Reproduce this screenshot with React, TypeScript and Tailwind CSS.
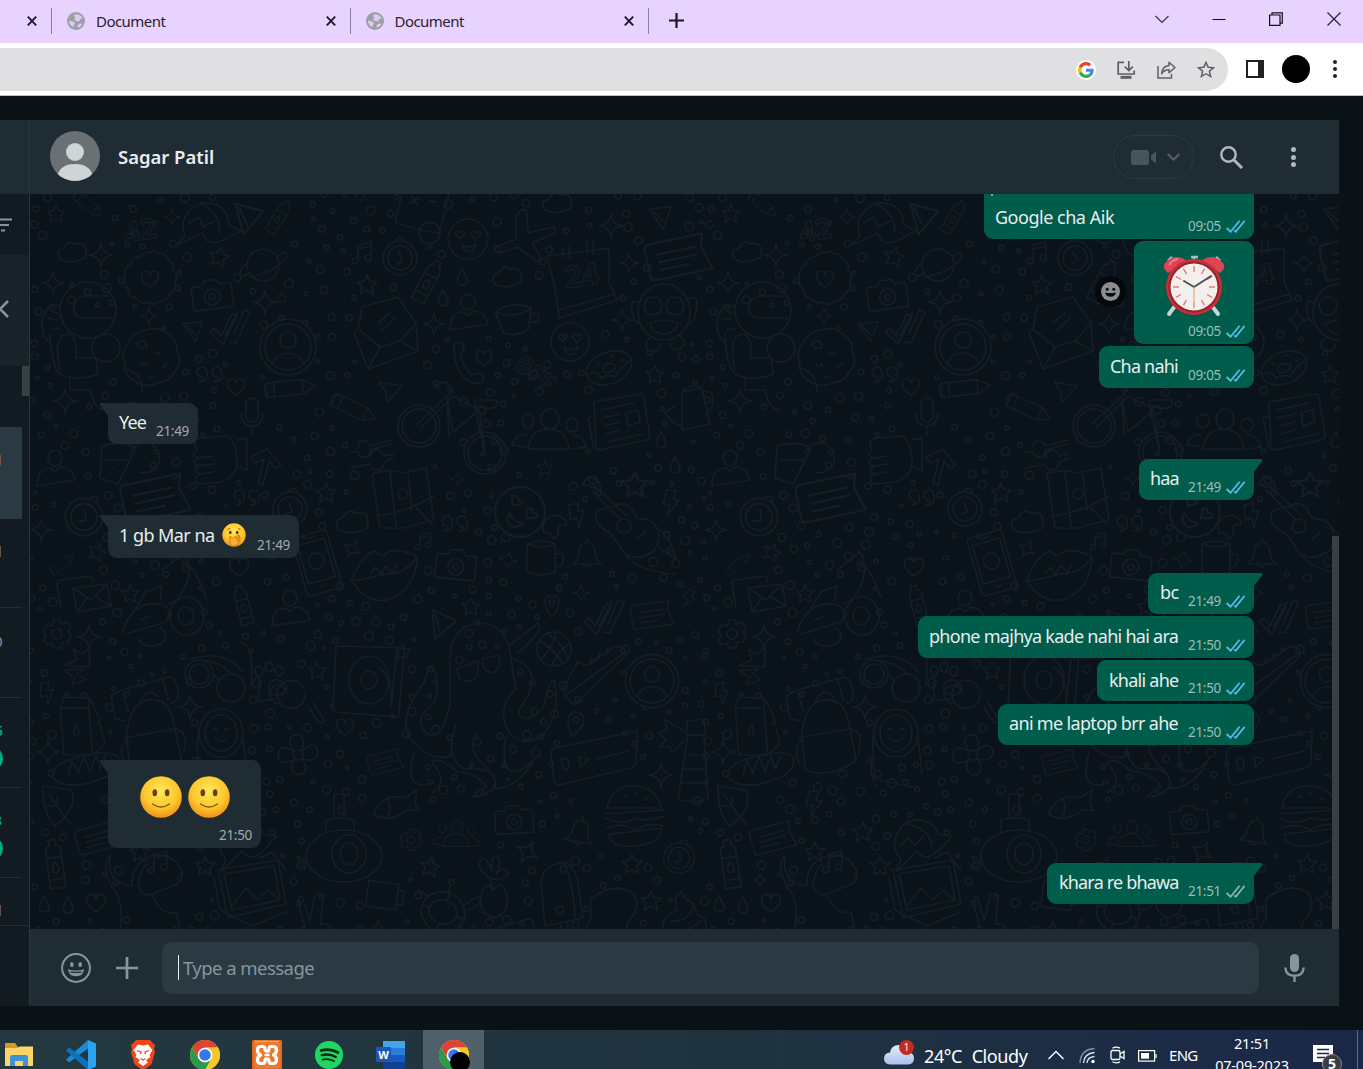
import React from 'react';

/* ---------- wallpaper doodles ---------- */

const P: Record<string, string> = {
  star: 'M0-10 2.8-3.6 10-3 4.6 1.8 6.4 9 0 5.2-6.4 9-4.6 1.8-10-3-2.8-3.6Z',
  spark: 'M0-12Q1-1 12 0Q1 1 0 12Q-1 1-12 0Q-1-1 0-12Z',
  heart: 'M0 8C-13 0-9-8-4-8Q-1-8 0-4Q1-8 4-8C9-8 13 0 0 8Z',
  cloud: 'M-12 7Q-18-1-8-4Q-4-13 4-8Q15-10 14 0Q17 6 7 8Q-4 12-12 7Z',
  camera: 'M-18-9H-9L-6-14H6L9-9H18Q20-9 20-7V13Q20 15 18 15H-18Q-20 15-20 13V-7Q-20-9-18-9ZM8 3A8 8 0 1 1-8 3A8 8 0 1 1 8 3ZM3 3A3 3 0 1 1-3 3A3 3 0 1 1 3 3Z',
  check: 'M-20 4-15 0-9 8 2-14 7-12-7 16ZM-5 8 8-16M0 14 6 15 20-16 14-18 4 6',
  tri: 'M-10-8 12-10 4 12ZM-6-6 4 4',
  note: 'M-24-10Q-24-14-20-14H22L19-4 24 14H-20Q-24 14-24 10ZM-15-5H14M-15 1H14M-15 7H6',
  quotes: 'M-3-5A5 5 0 1 0-6 3Q-5 7-10 8Q0 8-2-2ZM12-5A5 5 0 1 0 9 3Q10 7 5 8Q15 8 13-2Z',
  music: 'M-6 8V-8L7-11V5M-6 8A3 3 0 1 1-9 5H-6M7 5A3 3 0 1 1 4 2H7M-6-4 7-7',
  bolt: 'M-4-12 5-11 2-3 8-2-3 13-1 3-8 2Z',
  pin: 'M0 13Q-8 1-8-4A8 8 0 1 1 8-4Q8 1 0 13ZM3-4A3 3 0 1 1-3-4A3 3 0 1 1 3-4Z',
  bell: 'M-14 10Q-8 6-8-2Q-7-11 0-12Q7-11 8-2Q8 6 14 10ZM-4 10Q0 16 4 10M0-12V-16',
  avatar: 'M28 0A28 28 0 1 1-28 0A28 28 0 1 1 28 0ZM23 0A23 23 0 1 1-23 0A23 23 0 1 1 23 0ZM8-7A8 8 0 1 1-8-7A8 8 0 1 1 8-7ZM-15 16Q-12 6 0 6Q12 6 15 16',
  face: 'M20 0A20 20 0 1 1-20 0A20 20 0 1 1 20 0ZM-13-6Q-10-10-7-6Q-4-10-3-6L-8 0ZM3-6Q6-10 8-6Q12-9 13-5L7 1ZM-6 6Q2 10 8 5Q6 14 0 13Q-5 12-6 6Z',
  ring: 'M17 0A17 17 0 1 1-17 0A17 17 0 1 1 17 0ZM12 0A12 12 0 1 1-12 0A12 12 0 1 1 12 0ZM-2-6 3 2-3 6M-4-18Q0-24 4-18',
  bottle: 'M-7 22V-10Q-7-16-3-17V-22H3V-17Q7-16 7-10V22ZM0-2Q-6 7 0 8Q6 7 0-2ZM-7-6H7M-7 14H7',
  envelope: 'M-30-6-26-28 10-38 28-12 30 16-20 34-34-2ZM-30-6-8 12 12 6 28-12M-8 12-20 34M12 6 30 16M-10-12 2-22M-6-4 8-18',
  letters: 'M-24 12-28-12Q-28-16-24-16L4-20Q8-20 8-14M-12-8 22-12 26 10-8 16ZM-12-8 6 4 22-12M-8 16 2 2M26 10 10 0',
  person: 'M7-14A7 8 0 1 1-7-14A7 8 0 1 1 7-14ZM-18 14Q-18-4-4-4L0 0 5-5Q18-4 20 8Z',
  people: 'M9-14A9 10 0 1 1-9-14A9 10 0 1 1 9-14ZM-22 16Q-20-3-3-4Q17-4 19 16ZM-16-12A6 7 0 1 1-28-12A6 7 0 1 1-16-12ZM-24 2Q-34 0-38 12L-24 14M28-8A6 7 0 1 1 16-8A6 7 0 1 1 28-8ZM22 2Q32 2 36 14L22 16',
  cup: 'M-18-8Q0-18 18-8L14 12Q0 20-12 14ZM-18-8Q0 2 18-8M17-2Q28-4 24 4Q20 8 14 6',
  mug: 'M-14-14Q0-20 14-14V14Q0 20-14 14ZM-14-14Q0-8 14-14M14-4Q24-6 22 4Q20 10 14 8',
  donut: 'M-22 8Q-26-4-8-14Q14-22 22-10Q26 4 8 14Q-16 22-22 8ZM7-2Q5 4-2 5Q-8 4-6-1Q0-8 7-2ZM-20 6Q-12 2-8 10Q0 6 6 9Q10 0 22-8M-12-6-9-3M2-13 5-11M12-6 15-9',
  phone: 'M-14-18Q-16-22-10-23-4-22-4-15L-7-10Q-6 2 4 10L10 8Q17 8 15 15 10 20 4 18-14 10-14-18Z',
  mobile: 'M-18-26Q-18-30-14-30H14Q18-30 18-26V26Q18 30 14 30H-14Q-18 30-18 26ZM-14-22H14V18H-14ZM8-2A8 8 0 1 1-8-2A8 8 0 1 1 8-2ZM-4-26H4M-3 24H3',
  lips: 'M-34 10Q-22-14-8-18L0-12Q12-22 34-8Q22 8 2 6Q-12 8-34 10ZM-32 12Q-20 34 0 32Q28 26 34-6M-14 4-8-2-4 6 2-2 8 5 14-3',
  map: 'M-30-24Q-12-30 0-25L24-30 32 22Q14 26 2 30L-22 30ZM-26 18Q0 16 32-2M12 8 30 26M-12-26-6 28M6-24 10 12M6-4A5 5 0 1 1-4-4A5 5 0 1 1 6-4Z',
  bike: 'M21 0A21 21 0 1 1-21 0A21 21 0 1 1 21 0ZM17 0A17 17 0 1 1-17 0A17 17 0 1 1 17 0ZM87 27A21 21 0 1 1 45 27A21 21 0 1 1 87 27ZM83 27A17 17 0 1 1 49 27A17 17 0 1 1 83 27ZM-2-2 30-32Q36-42 24-44Q14-42 20-36M2 2 34-30 60-16 34 6 28-28M28-28 30 10M60-16 66 27M56-18 66 27M56-26H78Q80-16 66-18L56-20Z',
  calendar: 'M-36-26 26-34V0L34 18-24 36-28 6ZM-28 6-36-26M-24 28 32 12M-20-36V-24M-14-36V-24M4-40V-28M10-40V-28',
  monkey: 'M26 0A26 28 0 1 1-26 0A26 28 0 1 1 26 0ZM-2-6A9 9 0 1 1-20-6A9 9 0 1 1-2-6ZM20-6A9 9 0 1 1 2-6A9 9 0 1 1 20-6ZM-24-8Q-34-16-32 0Q-30 10-24 12M24-12Q36-20 32 0Q30 12 24 12M-14 12Q0 4 14 12Q10 22 0 22Q-10 22-14 12ZM-14 26A7 7 0 1 0-4 32M6 30A7 7 0 1 0 16 24',
  planet: 'M16 0A16 16 0 1 1-16 0A16 16 0 1 1 16 0ZM-14 8Q-26 16-22 4Q-19 0-15-2M14-8Q26-18 23-6Q10 8-14 12',
  badge: 'M0-26Q5-30 9-25Q16-26 18-19Q25-16 23-9Q29-3 25 3Q27 11 20 14Q18 22 10 22Q4 28-2 23Q-10 26-14 19Q-22 18-22 10Q-29 4-25-3Q-27-10-20-14Q-18-22-10-22Q-6-28 0-26ZM0 8C-13 0-9-8-4-8Q-1-8 0-4Q1-8 4-8C9-8 13 0 0 8Z',
  astro: 'M28-38A28 28 0 1 1-28-38A28 28 0 1 1 28-38ZM24-30H-6Q-16-32-14-44Q-8-54 4-52H22M-28-42Q-44-44-46-26Q-46-10-38-6M-40-30-30-28M-38-38-30-34M-36-18-28-20M-38-14Q-36 20-28 26Q-10 34 10 26L8 10H-12V-4Q-16-18-26-12Q-34-4-28 22M18-14A14 14 0 1 0 32 0A14 14 0 0 0 18-14M-18 30V42H2Q6 62 18 62M36 20Q54 24 54 44',
  cookie: 'M0-28Q10-30 18-22Q27-16 26-6Q32 6 24 14Q18 26 6 26Q-6 32-16 24Q-28 18-26 6Q-31-6-23-14Q-18-26 0-28ZM-14-14Q-6-20-4-10Q-12-6-14-14ZM10-6A3 3 0 1 1 4-6M-4 6A3 3 0 1 1-10 6M12 10 16 6M-2 20H4',
  pencil: 'M-26-8H14L28 0 14 8H-26ZM-18-8V8M14-8V8M-26-8Q-32 0-26 8',
  mic: 'M-6-12A6 6 0 0 1 6-12V0A6 6 0 0 1-6 0ZM-11-2Q-10 10 0 10Q10 10 11-2M0 10V20',
  plane: 'M-4-26Q2-30 3-22L4-4 30-10Q32-6 30-4L8 6 18 22Q16 26 12 24L-6 10-24 16Q-30 16-28 10L-8 2-8-20Z',
  calc: 'M-24-26 20-28Q24-28 24-24V14Q24 18 20 18H-20Q-24 18-24 14ZM-14-14-6-6M-14-6-6-14M6-14H14M14 8A11 11 0 1 0 25 19A11 11 0 0 0 14 8',
  news: 'M-26-20 20-28Q24-28 24-24L30 14Q30 18 26 18L-20 28Q-24 28-24 24ZM-26-6-32-4-26 26-20 28M-18-12 14-19M-18-4 0-8M-16 4 0 0M-14 12 0 8M-12 20 22 12M6-9 18-12 20 0 8 4Z',
  kettle: 'M-10-18 10-22 18 14-10 20ZM-16-4-28 2M-28 2Q-18 16-10 16M10-18Q24-22 20-4L14 6M-10-18Q0-28 10-22',
  sliders: 'M-26 2H-18A6 6 0 0 0-6 0L16-6M-26 18-6 14A6 6 0 0 0 8 12L18 8M-18-2A6 6 0 0 1-6-4L16-10M-6 8A6 6 0 0 1 8 6L18 4',
  guitar: 'M-42-44-36-52-26-46-24-38ZM-30-42 2-12M-34-38-4-8M6-2A7 7 0 1 1-8-2A7 7 0 1 1 6-2ZM-10-22Q0-28 8-18Q10-8 24-8Q40 2 30 22Q14 34 0 26Q-8 14-14 6Q-36-6-26-18ZM30 0Q46 6 50 30M0 26Q14 44 50 46M34 20 52 32M12 12 20 4',
  ball: 'M17 0A17 17 0 1 1-17 0A17 17 0 1 1 17 0ZM-14-8Q0 0 8 14M-6-15Q8-6 14 9M-13 10Q-2 0 2-17M-2 16Q4 2 16-6',
  burger: 'M-28-6Q-24-28-2-28Q22-28 26-6ZM-30 0 28-4M-30 4Q-14 12 0 4Q14 8 30 2M-28 14Q-14 8 0 16Q14 8 28 12M-26 20Q0 18 26 14Q26 30 0 32Q-26 34-26 20ZM-12-16-9-18M0-20 3-22M10-14 13-16',
  gear: 'M-3-14H3L5-10 10-12 14-7 11-3 14 2 11 8 6 8 4 14H-3L-5 9-10 11-14 6-11 2-14-4-10-9-5-8ZM5 0A5 5 0 1 1-5 0A5 5 0 1 1 5 0Z',
  sub: 'M38 0A38 26 0 1 1-38 0A38 26 0 1 1 38 0ZM22-2A17 19 0 1 1-12-2A17 19 0 1 1 22-2ZM14-2A9 11 0 1 1-4-2A9 11 0 1 1 14-2ZM-18-24V-36Q-4-40 10-36V-26M-10-38V-62H0V-38M-38 6Q-52-6-44 6Q-54 14-38 10',
  turntable: 'M-33-34 32-32Q36-32 35-28L30 34Q30 38 26 37L-33 32Q-36 32-36 28ZM20 0A20 24 0 1 1-20 0A20 24 0 1 1 20 0ZM8 0A8 9 0 1 1-8 0A8 9 0 1 1 8 0ZM10-12Q24-4 22 24M28-30 22 26',
  octo: 'M-34 8V-40Q-32-72-4-74Q22-72 26-44L32-8M-28-28-6-36V-22Q-12-12-24-18ZM-2-38 14-42Q20-30 8-24-2-26-2-38M-34 8Q-44 48-58 36Q-70 22-54 10Q-44 2-48-22Q-54-40-60-14Q-92 28-68 48Q-50 66-30 58M32-8Q14 8 22 30Q34 52 56 40Q78 20 70-18Q64-12 60 8Q56 18 44 22Q28 20 40 6Q60-28 30-38M-28 28Q-40 60-20 72Q6 70 10 80Q14 98-12 100Q-4 92 2 90Q-6 76-28 74Q-46 58-52 66Q-34 84-52 96M-8 36Q-18 54 4 72Q16 88 10 92Q36 90 50 62Q32 82 22 70Q18 54 22 40M26-52 54-74Q62-68 34-44M-70 56Q-82 96-50 86',
  turtle: 'M22 0A22 20 0 1 1-22 0A22 20 0 1 1 22 0ZM14 0A14 12 0 1 1-14 0A14 12 0 1 1 14 0ZM-14 0H-22M14 0H22M0-12V-20M0 12V20M-20-10-30-12M18-14Q28-30 32-26Q32-16 22-10M22 8 30 12M-2 20V34M-2-20V-28',
  fish: 'M-22 8Q-10-14 10-8L22-16 20-2 24 4 12 4Q-4 18-22 8ZM-8-8Q-2 0-8 12M-14 3H-13',
  bread: 'M-32 8Q-38-4-14-12Q14-22 30-16Q38-8 24 4Q-14 22-32 8ZM-18 4-14-10-8 2-2-14 4 0 10-16 14-2 20-16',
  milk: 'M-22-22-18-34H10L20-14 28 18 14 30H-18ZM-22-22H10L14 30M10-34V-22M-4-4Q-10 8-4 9Q2 8-4-4ZM18-4 24-10',
  bag: 'M-24 40-28 4Q-24-32-4-34Q18-36 22-8L30 30Q0 50-24 40ZM-30 6 26-4M-26 8Q-38 14-30 34M26-2Q38 0 32 22M-30-12-40-14-44-38-34-44 18-58Q28-54 26-34L20-30M-14-30Q-6-50 6-36M10-56 16-34M-32-42-26-22',
  girl: 'M22 0A22 24 0 1 1-22 0A22 24 0 1 1 22 0ZM16 0A16 18 0 1 1-16 0A16 18 0 1 1 16 0ZM-22-4Q-26 20-20 46L16 54M22 4 26 40M-20 24Q-30 30-20 54M-8-3Q-6-7-4-3M4-3Q6-7 8-3M-6 5Q0 11 6 5',
  goggles: 'M-12 0A14 14 0 1 1-40 0A14 14 0 1 1-12 0ZM20 14A14 14 0 1 1-8 14A14 14 0 1 1 20 14ZM-36-14Q0-26 18-2M-30-14Q-4-14 6 0M16-32Q30-28 26 12M-12 0-6 6M-16 0A10 10 0 1 1-36 0A10 10 0 1 1-16 0Z',
  scooter: 'M-40 14Q-30-18-2-14Q12-10 4 4L-36 16M42-2A17 19 0 1 1 8-2A17 19 0 1 1 42-2ZM32-2A8 9 0 1 1 16-2A8 9 0 1 1 32-2ZM4 4 10-4M-24 20A14 10 0 1 0-2 10M-26-10-16-26 0-32-2-18M20-56 28-50Q24-20 6-14M22-58Q36-46 44-20M0-48 16-60 22-66Q30-60 24-50M-22 2-12-2',
  magnify: 'M10 0A14 14 0 1 1 9-4M18 10 30 28 24 30 14 14M-8 0A9 9 0 1 0-14 10M-36-12V8L-20 6',
  paw: 'M-12-10A4 5 0 1 1-12-12M-2-14A4 5 0 1 1-2-16M8-10A4 5 0 1 1 8-12M-14 2A4 5 0 1 1-14 0M-6 2Q4-8 12 6Q6 18-6 10Z',
  dog: 'M-28 0Q-30-22-8-30Q14-34 22-14Q24-4 12 0L-8 8Q-20 12-22-4Q-18-20-12-22M-30 0Q-54-4-50-30Q-60-20-46 4Q-36 14-40 44L-20 46M-8 8Q0 30 16 26L20 44H0M22-14 18-8M0-16H3',
  picture: 'M-34-18 26-28 34 16-24 30ZM-28-14 22-22 28 12-20 22ZM-20 18-6 0 6 12 16 2 28 12M-38-10-32 22 0 38 34 24M8-30 20-36 34-18',
  peace: 'M-12 0Q-24-34-16-34L-8-8-2-34Q4-40 6-32L4-4M-16 4Q-20 28 0 30Q20 30 18 6Q14-6 4-4M-12-2Q-24 0-16 10Q0 8 4 14M0 2Q14 0 10 14',
  fist: 'M-20-12Q-26-24-14-24L10-26Q20-20 20 0Q20 14 4 20L-18 22Q-26 16-16 12Q-26 10-18 4Q-28 0-18-4Q-28-8-20-12ZM-18-4-4-6M-18 4-4 2M-16 12-4 10M20-22 30-24V8L20 4',
  shoe: 'M-30 14-16-12Q-8-4 0-12L20-26Q34-28 30-16L-20 32-30 22ZM-28 22 30-20M-6-8-2-14M4-14 6-20M12-20 14-26',
  voice: 'M-44-12Q-44-16-40-17L42-34 41-2Q40 2 36 3L-36 20Q-40 20-41 16ZM-34-6Q-26-10-26 2Q-32 10-34-6ZM-16-8-6-6-14 2ZM2-6 34-14',
  light: 'M-8-20H8L12 44Q0 50-18 44ZM-8-34 8-36 10-20H-10ZM-12 0H10M-14 14H10M-14 28H12M-12-24-32-36-28-26-38-22-30-16-36-8-26-8-24-2-12-14',
  ice: 'M-18-16Q-18-34 4-38Q18-34 20-10L24 18-14 26ZM-6-2H-5M8-6H9M-4 8 4 6Q6 14 0 14ZM2 24 4 38 10 36 8 22M4-38Q14-20 16 16',
  cupcake: 'M-22 6Q-24-10-8-14L-10-26-4-34Q-2-26 8-22Q12-8 20-6L22 6-22 18ZM-22 18-8 42Q10 44 20 32L22 6M-14-4Q2-2 8-18M-20 10Q6 6 16-4',
  radish: 'M-12 4Q-18 24 0 30Q18 24 12 4Q6-8 0 2Q-8-8-12 4ZM-2 2-4-10Q-20-20-12-30Q-6-30-2-16Q-4-32 4-32Q8-26 2-14Q12-24 14-14Q8-6-4-10',
  battery: 'M-20-14H10V12H-20ZM10-8H16V6H10Z',
  chatface: 'M-32-22 22-38Q26-38 27-34L34 10 28 26 18 18-20 30Q-24 30-25 26ZM14-2A16 18 0 1 1-18-2A16 18 0 1 1 14-2ZM-10-4Q-7-8-5-4M6-12V-8M-10 4Q0 14 8 0',
  cat: 'M-26 20-28-12-18-6H8L16-18 20 20M-12 6H-11M4 4H5M-6 12 0 14 4 10M36 20Q46 0 34-12',
  blob: 'M-22-24Q0-42 20-30Q30-16 14 0Q14 20 6 28Q-4 30-10 14L-28 10Q-28 2-22-4Z',
  leaf: 'M-14-20 14-16Q22 2-2 20Q-14 10-14-20ZM-8-12 4 6M4 6 14 18M-10 0 0 0 0-10',
  flower: 'M5 0A5 5 0 1 1-5 0A5 5 0 1 1 5 0ZM-4-4Q-14-20 0-20Q8-18 4-4Q18-16 20-2Q18 8 4 4Q14 18 0 20Q-10 16-4 5Q-20 12-20 0Q-18-12-4-4Z',
  drop: 'M0-8Q-8 4-2 8Q8 8 4 0Z',
  glass: 'M-14-18Q6-24 20-16L2 20-16 14ZM-10-4 12-4M-4 4H-3M2 8H3M14-10A15 15 0 1 1 24 8',
  arrow: 'M0-16 14 0 8 3 2-4-4 20-9 18-3-6-12-2-16-8Z',
  cursor: 'M-10-8 13-4-2 12-3 2Z',
  croissant: 'M-10 6Q-14-10 2-12Q14-8 12-2Q4-4 4 2Q6 8 0 12Q-4 4-10 6Z',
  burst: 'M-4-20 6-14 14-22 14 0-14-2 0-8ZM-14 4 8 2 0 8 10 14-6 20-2 12Z',
  eyes: 'M-22 10Q-30-10-6-22Q20-24 22 0L34 6 26 10Q0 26-4 8L-30 20ZM-6-22Q16-8 12 8M-18-2-8-8-4 2 8-4',
};

type D = [string, number, number, number?, number?];
const DOODLES: D[] = [
  ['star', 56, 214, 0, 0.9], ['pencil', 88, 205, 40, 0.6], ['eyes', 207, 225], ['spark', 172, 217, 0, 0.7], ['tri', 244, 218, 20, 1.3],
  ['bottle', 279, 217, 32, 0.8], ['cloud', 72, 252], ['spark', 101, 255], ['badge', 150, 279], ['star', 219, 257, 12], ['planet', 263, 265],
  ['camera', 212, 294, -8], ['spark', 53, 283, 0, 0.9], ['spark', 265, 302], ['astro', 88, 348], ['cookie', 151, 357], ['check', 230, 328],
  ['tri', 192, 331, 0, 0.9], ['spark', 149, 316, 0, 0.7], ['avatar', 288, 347], ['quotes', 209, 374], ['heart', 236, 387], ['pencil', 290, 388, -6, 0.9],
  ['spark', 65, 401], ['mic', 252, 416], ['calc', 421, 212, 14, 0.95], ['face', 468, 239], ['plane', 524, 237], ['ring', 400, 258], ['bottle', 428, 281, 28],
  ['star', 367, 285], ['music', 364, 253], ['envelope', 388, 335], ['cloud', 507, 277], ['drop', 462, 277], ['drop', 443, 298],
  ['person', 468, 316], ['cup', 514, 318, -6], ['calendar', 583, 282], ['spark', 611, 226], ['tri', 659, 217], ['cloud', 557, 203], ['note', 678, 257, -12, 1.3],
  ['monkey', 664, 312], ['face', 570, 342, 0, 0.95], ['donut', 609, 368], ['star', 655, 375, 0, 0.9], ['spark', 434, 324, 0, 0.9], ['spark', 622, 320, 0, 0.9],
  ['phone', 468, 365], ['heart', 484, 358, 0, 0.9], ['spark', 629, 263, 0, 0.8], ['bike', 419, 426], ['people', 550, 433], ['news', 620, 422], ['kettle', 692, 410],
  ['pencil', 354, 409, 25, 0.85], ['cursor', 389, 390], ['sliders', 376, 450], ['map', 402, 498], ['star', 545, 468, 0, 0.8], ['face', 520, 512, 40, 1.25],
  ['quotes', 454, 523], ['camera', 456, 564, 6], ['mug', 541, 558], ['bell', 587, 554], ['guitar', 625, 528], ['star', 635, 485, 0, 1.3], ['bolt', 577, 515, -20],
  ['bolt', 671, 502], ['lips', 384, 568, -6], ['cloud', 352, 522, 0, 1.1], ['music', 425, 541, 0, 0.8], ['spark', 352, 549, 30, 0.8], ['spark', 508, 560, 10, 0.8],
  ['croissant', 554, 527], ['spark', 458, 479, 0, 0.6], ['glass', 116, 464], ['person', 55, 472], ['fist', 217, 462], ['arrow', 267, 465], ['ring', 84, 517, 30, 1.1],
  ['note', 155, 498, -12, 1.35], ['quotes', 246, 497], ['ring', 290, 509, 10], ['star', 326, 493], ['spark', 41, 530, 0, 0.9], ['star', 97, 552, 20, 0.9],
  ['pencil', 63, 564, -38, 0.5], ['letters', 85, 596], ['star', 130, 594, 0, 0.9], ['scooter', 162, 618], ['mobile', 317, 563, -16], ['bottle', 243, 605, -14, 0.9],
  ['person', 290, 612], ['heart', 239, 567, 0, 1.1], ['gear', 57, 634], ['spark', 89, 637], ['burst', 77, 667, 0, 0.9], ['bolt', 47, 693, -15, 0.9], ['bag', 153, 732, 0, 0.95],
  ['goggles', 225, 674], ['paw', 275, 682], ['magnify', 295, 693], ['star', 317, 671, 0, 0.9], ['milk', 80, 728, 0, 0.9], ['girl', 221, 733], ['spark', 190, 707],
  ['turntable', 369, 680], ['star', 471, 607, 0, 0.9], ['tri', 438, 624, 30, 1.2], ['ball', 554, 649], ['shoe', 594, 673], ['avatar', 652, 681, 0, 0.95],
  ['note', 652, 615, -8, 0.85], ['check', 604, 618], ['pin', 552, 606, 0, 0.9], ['octo', 484, 697], ['pin', 575, 724, 15], ['voice', 595, 765], ['light', 696, 755],
  ['burger', 635, 814], ['bell', 580, 832, 10], ['camera', 514, 819, -4, 0.95], ['fish', 395, 806], ['sub', 344, 856], ['people', 457, 836, 0, 0.65], ['gear', 411, 840, 0, 0.75],
  ['radish', 494, 888], ['ice', 559, 900], ['blob', 613, 923], ['cupcake', 685, 925], ['star', 632, 864], ['ring', 679, 858, 20, 0.9], ['turtle', 443, 912, 20],
  ['battery', 387, 897, 8], ['peace', 317, 928, 0, 0.95], ['person', 360, 948], ['chatface', 506, 957], ['cat', 586, 985], ['star', 651, 901], ['note', 385, 762, -14, 0.7],
  ['star', 403, 652, 0, 0.8], ['bread', 86, 771], ['leaf', 57, 806], ['note', 98, 838, -15, 0.9], ['bottle', 55, 864, -8, 1.1], ['dog', 160, 886], ['picture', 252, 888],
  ['star', 205, 866], ['heart', 96, 903, 0, 1.1], ['drop', 44, 904], ['drop', 68, 905], ['spark', 48, 752], ['flower', 298, 755], ['eyes', 243, 842, -20], ['star', 140, 852],
  ['bolt', 139, 803], ['star', 188, 832], ['spark', 661, 775], ['bolt', 689, 598, 20, 0.7], ['heart', 345, 727], ['spark', 581, 593, 0, 0.7], ['star', 430, 867, 10], ['star', 419, 954],
  ['spark', 527, 852, 30], ['spark', 378, 930, 0, 0.8], ['drop', 661, 440], ['drop', 675, 465], ['music', 160, 862],
];

const OUTLINED: [string, number, number, number, number][] = [
  ['42', 142, 240, -10, 28], ['24', 583, 286, -8, 30], ['BFF', 530, 380, 36, 24],
];

/* Small rings scattered between the larger drawings. */
const DOTS: [number, number, number][] = (() => {
  const out: [number, number, number][] = [];
  let s = 7;
  const rnd = () => ((s = (s * 16807) % 2147483647) / 2147483647);
  const big = ['astro', 'octo', 'guitar', 'sub', 'bag', 'scooter', 'bike', 'dog', 'picture', 'calendar', 'envelope', 'voice', 'news', 'map', 'turntable', 'light', 'lips', 'monkey', 'burger', 'people'];
  for (let i = 0; i < 9000 && out.length < 560; i++) {
    const x = 30 + rnd() * 675, y = 194 + rnd() * 740, r = 1.6 + rnd() * 2.8;
    if (DOODLES.some(d => Math.hypot(d[1] - x, d[2] - y) < (big.includes(d[0]) ? 42 : ['star', 'spark', 'heart', 'drop', 'bolt', 'music', 'quotes', 'pin'].includes(d[0]) ? 16 : 28))) continue;
    if (out.some(o => Math.hypot(o[0] - x, o[1] - y) < 13)) continue;
    out.push([x, y, r]);
  }
  return out;
})();

const Tile = ({ dx }: { dx: number }) => (
  <g transform={`translate(${dx} 0)`}>
    {DOODLES.map(([k, x, y, r = 0, sc = 1], i) => (
      <path key={i} d={P[k]} transform={`translate(${x} ${y}) rotate(${r}) scale(${sc})`} />
    ))}
    {OUTLINED.map(([t, x, y, r, f]) => (
      <text key={t} transform={`translate(${x} ${y}) rotate(${r})`} fontSize={f} textAnchor="middle" fontFamily="Open Sans, sans-serif" fontWeight="700" strokeWidth="1.2">{t}</text>
    ))}
    {DOTS.map(([x, y, r], i) => <circle key={i} cx={x} cy={y} r={r} />)}
  </g>
);

const Wallpaper = () => (
  <svg className="absolute inset-0 h-full w-full" viewBox="30 194 1309 735" preserveAspectRatio="none" fill="none" stroke="#151e25" strokeWidth="1.7" strokeLinejoin="round" strokeLinecap="round" aria-hidden="true">
    <Tile dx={0} />
    <Tile dx={675} />
  </svg>
);

/* ---------- browser chrome ---------- */

const Globe = () => (
  <svg className="h-[18px] w-[18px]" viewBox="0 0 18 18">
    <circle cx="9" cy="9" r="9" fill="#9b9fa6" />
    <path d="M9.500 2.200Q6.500 2.600 7 4.500L8.500 5Q7 6 7.500 8L10 9.500 12.500 9.200 13 7.200 15.500 6.500Q14 2.500 9.500 2.200ZM2 8.500 6 9.500Q8.500 10.500 8 12L6.500 13V15.300Q2 13 2 8.500ZM10.500 15.800Q14 15.200 15.500 11.800L12.500 11.500 10.500 13.500Z" fill="#dccbf0" />
  </svg>
);

const TabClose = () => (
  <svg className="h-[10px] w-[10px]" viewBox="0 0 10 10" stroke="#241c2e" strokeWidth="1.9"><path d="M.8.6 9.200 9.400M9.200.6.8 9.400" /></svg>
);

const Tab = () => (
  <div className="flex h-[26px] w-[298.500px] items-center border-l border-[#8e7f9f] pl-[15px] pr-[14px]">
    <Globe />
    <span className="ml-[11px] flex-1 text-[15px] leading-5 tracking-[-0.55px] text-[#2a2233]">Document</span>
    <TabClose />
  </div>
);

const TabStrip = () => (
  <div className="flex h-[43px] items-center bg-[#e8d3ff] pb-[2px]">
    <div className="flex w-[51px] justify-end pr-[14px]"><TabClose /></div>
    <Tab />
    <Tab />
    <div className="flex h-[26px] flex-1 items-center border-l border-[#8e7f9f] pl-[20px]">
      <svg className="h-[15px] w-[15px]" viewBox="0 0 15 15" stroke="#1d1626" strokeWidth="2.200"><path d="M7.500 0v15M0 7.500h15" /></svg>
    </div>
    <div className="mb-[4px] flex items-center pr-[22px]">
      <svg className="h-[14px] w-[14px]" viewBox="0 0 14 14" fill="none" stroke="#3c3050" strokeWidth="1.200"><path d="M.5 4 7 10.500 13.500 4" /></svg>
      <svg className="ml-[43px] h-[14px] w-[14px]" viewBox="0 0 14 14" stroke="#140d1d" strokeWidth="1"><path d="M.5 7.500h13" /></svg>
      <svg className="ml-[43px] h-[14px] w-[14px]" viewBox="0 0 14 14" fill="none" stroke="#140d1d" strokeWidth="1.200"><path d="M.6 3h10.400v10.400H.6ZM3 3V.8h10.300v10.400H11" /></svg>
      <svg className="ml-[44px] h-[14px] w-[14px]" viewBox="0 0 14 14" stroke="#2a1f38" strokeWidth="1.200"><path d="M.5.5l13 13M13.500.5l-13 13" /></svg>
    </div>
  </div>
);

const Toolbar = () => (
  <div className="flex h-[53px] items-center border-b border-[#bfc3c6] bg-white">
    <div className="flex h-[43px] w-[1228px] items-center justify-end rounded-r-full bg-[#e0e0e2] pr-[12px] pt-px">
      <div className="flex h-[20px] w-[20px] items-center justify-center rounded-full bg-white">
        <svg className="h-[16px] w-[16px]" viewBox="0 0 48 48">
          <path fill="#EA4335" d="M24 9.500c3.540 0 6.710 1.220 9.210 3.600l6.850-6.850C35.900 2.380 30.470 0 24 0 14.620 0 6.510 5.380 2.560 13.220l7.980 6.190C12.430 13.720 17.740 9.500 24 9.500z" />
          <path fill="#4285F4" d="M46.980 24.550c0-1.570-.15-3.090-.38-4.550H24v9.020h12.940c-.58 2.960-2.260 5.480-4.780 7.180l7.730 6c4.510-4.180 7.090-10.360 7.090-17.650z" />
          <path fill="#FBBC05" d="M10.530 28.590c-.48-1.450-.76-2.990-.76-4.590s.27-3.140.76-4.590l-7.980-6.190C.92 16.460 0 20.120 0 24s.92 7.540 2.560 10.780l7.970-6.190z" />
          <path fill="#34A853" d="M24 48c6.480 0 11.930-2.130 15.890-5.810l-7.730-6c-2.150 1.450-4.920 2.300-8.160 2.300-6.260 0-11.570-4.220-13.470-9.910l-7.980 6.190C6.510 42.620 14.620 48 24 48z" />
        </svg>
      </div>
      <svg className="ml-[20px] h-[18px] w-[20px]" viewBox="0 0 20 18" fill="none" stroke="#5f6064" strokeWidth="1.700"><path d="M8 1.300H2.200V13H18.200V9.500M12.800 0v9M8.800 5.600l4 4 4-4" /><path d="M4.500 16.300h11" strokeWidth="3" /></svg>
      <svg className="ml-[21px] h-[18px] w-[19px]" viewBox="0 0 19 18" fill="none" stroke="#5f6064" strokeWidth="1.500"><path d="M1 5v12h13.500v-4" /><path d="M12 1.200 18 6.500 12 11.800V8.700Q7 8.700 4.600 12.800 5.300 5 12 4.400Z" strokeLinejoin="round" /></svg>
      <svg className="ml-[20px] h-[19px] w-[20px]" viewBox="1.500 1.500 21 20.500" fill="#5f6064"><path d="M22 9.240l-7.190-.62L12 2 9.190 8.630 2 9.240l5.460 4.730L5.820 21 12 17.270 18.180 21l-1.630-7.030L22 9.240zM12 15.400l-3.760 2.270 1-4.280-3.320-2.880 4.380-.38L12 6.100l1.710 4.040 4.380.38-3.320 2.880 1 4.280L12 15.400z" /></svg>
    </div>
    <div className="ml-[18px] h-[18px] w-[18px] border-y-2 border-l-2 border-r-[6px] border-[#202124]" />
    <div className="ml-[18px] h-[28px] w-[28px] rounded-full bg-black" />
    <div className="ml-[23px] flex flex-col gap-[3px]">
      <i className="h-[4px] w-[4px] rounded-full bg-[#202124]" />
      <i className="h-[4px] w-[4px] rounded-full bg-[#202124]" />
      <i className="h-[4px] w-[4px] rounded-full bg-[#202124]" />
    </div>
  </div>
);

/* ---------- chat list edge ---------- */

const Sidebar = () => (
  <div className="relative flex w-[30px] shrink-0 flex-col overflow-hidden border-r border-[#2b363d] bg-[#111b21]">
    <div className="h-[74px] bg-[#202c33]" />
    <div className="flex h-[61px] items-center">
      <svg className="h-[14px] w-[12px]" viewBox="0 0 12 14" stroke="#8696a0" strokeWidth="2"><path d="M0 1.500h12M0 7h9M1 12.500h4" /></svg>
    </div>
    <div className="flex h-[111px] items-center bg-[#182229] pb-[4px]">
      <svg className="h-[18px] w-[9px]" viewBox="0 0 9 18" fill="none" stroke="#8696a0" strokeWidth="2.500"><path d="M8 1 0 9l8 8" /></svg>
    </div>
    <div className="h-[61px]" />
    <div className="h-[92px] w-[22px] bg-[#2a3942] pt-[28px]"><div className="h-[11px] w-[1px] bg-[#6d5446]" /></div>
    <div className="h-[89px] w-[22px] border-b border-[#222d34] pt-[27px]"><div className="h-[11px] w-[1px] bg-[#6d5446]" /></div>
    <div className="h-[90px] w-[22px] border-b border-[#222d34] pt-[23px]"><span className="-ml-[6px] block text-[15px] leading-5 text-[#8696a0]">0</span></div>
    <div className="h-[90px] w-[22px] border-b border-[#222d34] pt-[23px]">
      <span className="-ml-[5px] block text-[14px] font-semibold leading-5 text-[#00a884]">5</span>
      <div className="-ml-[22px] mt-[5px] h-[25px] w-[25px] rounded-full bg-[#00a884]" />
    </div>
    <div className="h-[90px] w-[22px] border-b border-[#222d34] pt-[23px]">
      <span className="-ml-[6px] block text-[14px] font-semibold leading-5 text-[#00a884]">3</span>
      <div className="-ml-[22px] mt-[5px] h-[25px] w-[25px] rounded-full bg-[#00a884]" />
    </div>
    <div className="h-[48px] border-b border-[#222d34] pt-[27px]"><div className="h-[11px] w-[1px] bg-[#6d5446]" /></div>
    <div className="absolute right-0 top-[246px] h-[30px] w-[7px] bg-[#374045]" />
  </div>
);

/* ---------- chat ---------- */

const ChatHeader = () => (
  <div className="flex h-[74px] shrink-0 items-center bg-[#202c33] pl-[20px] pr-[42px]">
    <svg className="mb-[2px] h-[50px] w-[50px]" viewBox="0 0 50 50">
      <clipPath id="av"><circle cx="25" cy="25" r="25" /></clipPath>
      <g clipPath="url(#av)">
        <rect width="50" height="50" fill="#6a7175" />
        <circle cx="25" cy="21" r="9" fill="#cfd4d6" />
        <path d="M7 50Q7 33 25 33T43 50Z" fill="#cfd4d6" />
      </g>
    </svg>
    <div className="ml-[18px] flex-1 text-[18.500px] font-semibold tracking-[-0.02px] text-[#e9edef]">Sagar Patil</div>
    <div className="flex h-[44px] w-[81px] items-center justify-center gap-[10px] rounded-full border border-[#2d3a41] pl-[3px]">
      <svg className="h-[15px] w-[26px]" viewBox="0 0 26 15" fill="#47545c"><rect width="18" height="15" rx="2.500" /><path d="M20 5.500 25 1.500v12L20 9.500Z" /></svg>
      <svg className="h-[8px] w-[13px]" viewBox="0 0 13 8" fill="none" stroke="#56636a" strokeWidth="1.900"><path d="M.7 1 6.500 6.700 12.300 1" /></svg>
    </div>
    <svg className="ml-[26px] h-[23px] w-[23px]" viewBox="0 0 23 23" fill="none" stroke="#aebac1"><circle cx="8.500" cy="8.500" r="7.200" strokeWidth="2.400" /><path d="M13.500 13.500 22 22" strokeWidth="3" /></svg>
    <div className="ml-[48px] mr-px flex flex-col gap-[2.500px]">
      <i className="h-[5px] w-[5px] rounded-full bg-[#aebac1]" />
      <i className="h-[5px] w-[5px] rounded-full bg-[#aebac1]" />
      <i className="h-[5px] w-[5px] rounded-full bg-[#aebac1]" />
    </div>
  </div>
);

const Ticks = ({ read = true }: { read?: boolean }) => (
  <svg className={`ml-[5px] h-[13px] w-[19px] ${read ? 'text-[#53bdeb]' : 'text-[#8db5a8]'}`} viewBox="0 0 19 13" fill="none" stroke="currentColor" strokeWidth="1.800"><path d="M.6 8 4.600 11.700 13.600.8M8.200 10.300l1.500 1.400L18.600.8" /></svg>
);

type BubbleProps = { out?: boolean; tail?: boolean; time: string; read?: boolean; box: string; textBox?: string; children?: React.ReactNode };

const Bubble = ({ out, tail, time, read, box, textBox = '', children }: BubbleProps) => (
  <div className={`relative flex shrink-0 justify-between rounded-[9px] pl-[11px] ${out ? 'self-end bg-[#005c4b] pr-[9px]' : 'self-start bg-[#202c33] pr-[9px]'} ${tail ? (out ? 'rounded-tr-none' : 'rounded-tl-none') : ''} ${box}`}>
    {tail && (
      <svg className={`absolute top-0 h-[14px] w-[10px] ${out ? '-right-[9px] text-[#005c4b]' : '-left-[9px] -scale-x-100 text-[#202c33]'}`} viewBox="0 0 10 14" fill="currentColor"><path d="M0 0H8.500Q10 .5 9.200 2L1 13V14H0Z" /></svg>
    )}
    <div className={`whitespace-nowrap text-[18px] leading-[24px] text-[#e9edef] ${textBox}`}>{children}</div>
    <div className={`mb-[4px] flex items-center self-end text-[13.500px] leading-[18px] tracking-[-0.3px] ${out ? 'text-[#99beb7]' : 'text-[#a0a9ae]'}`}>
      {time}{out && <Ticks read={read} />}
    </div>
  </div>
);

const Clock = () => (
  <svg className="absolute left-[29px] top-[12px] h-[64px] w-[62px]" viewBox="0 0 62 64">
    <path d="M12 53 6 61M49 53l6 8" stroke="#c9d2d8" strokeWidth="4" strokeLinecap="round" />
    <path d="M31 8V3M28 4h7M5 8l4-4M53 4l4 4" stroke="#aeb9bf" strokeWidth="2.500" />
    <path d="M5 20Q-3 14 4 8Q12 1 21 6 23 7 23 9Z" fill="#dd4454" /><path d="M57 20Q65 14 58 8Q50 1 41 6 39 7 39 9Z" fill="#dd4454" />
    <path d="M6 12Q9 7 15 6" stroke="#f27a84" strokeWidth="2" fill="none" />
    <circle cx="31" cy="34" r="28" fill="#c92f3b" /><circle cx="31" cy="34" r="25.500" fill="#9d2029" /><circle cx="31" cy="34" r="23.500" fill="#f3efec" />
    {[0, 30, 60, 90, 120, 150, 180, 210, 240, 270, 300, 330].map(a => <path key={a} d="M31 13v6" transform={`rotate(${a} 31 34)`} stroke="#e0707b" strokeWidth="1.300" />)}
    <path d="M31 34 21 28M31 34 48 23" stroke="#4b5155" strokeWidth="2" strokeLinecap="round" />
    <path d="M31 34V55" stroke="#d9b98a" strokeWidth="1.300" />
  </svg>
);

const Smile = () => (
  <svg className="h-[42px] w-[42px]" viewBox="0 0 42 42">
    <defs><radialGradient id="sm" cx=".5" cy=".35" r=".68"><stop offset="0" stopColor="#ffe75c" /><stop offset=".6" stopColor="#fdc72c" /><stop offset="1" stopColor="#ee8b12" /></radialGradient></defs>
    <circle cx="21" cy="21" r="20.800" fill="url(#sm)" />
    <ellipse cx="14.800" cy="16.800" rx="2.300" ry="3.500" fill="#67400b" /><ellipse cx="27.200" cy="16.800" rx="2.300" ry="3.500" fill="#67400b" />
    <path d="M12.500 28Q21 34 29.500 28" fill="none" stroke="#8a560f" strokeWidth="1.400" strokeLinecap="round" />
  </svg>
);

const HandOverMouth = () => (
  <svg className="ml-[7px] inline-block h-[24px] w-[24px] align-[-5px]" viewBox="0 0 24 24">
    <circle cx="12" cy="12" r="11.700" fill="url(#sm)" />
    <path d="M5.500 6.500 8 5.500M16 5.500l2.500 1" stroke="#9b6210" strokeWidth="1" />
    <ellipse cx="8.300" cy="9.500" rx="1.300" ry="1.800" fill="#5c3609" /><ellipse cx="15.200" cy="9.500" rx="1.300" ry="1.800" fill="#5c3609" />
    <path d="M9.500 23Q7 20 8 17L7.500 14Q9 12.800 10.500 15L17 12Q18.300 12.800 17.300 13.800L13.500 16 18 14.200Q19 15.200 18 16L14.500 18 18 16.800Q18.500 17.800 17.500 18.600Q15 23.500 9.500 23Z" fill="#f9b233" stroke="#c8700d" strokeWidth=".8" />
  </svg>
);

const Messages = () => (
  <div className="relative flex-1 overflow-hidden bg-[#0b131a]">
    <Wallpaper />
    <div className="relative flex h-full flex-col pl-[78px] pr-[85px]">
      <Bubble out time="09:05" box="w-[270px] h-[45px] rounded-t-none" textBox="pt-[11px] tracking-[-0.48px]">Google cha Aik</Bubble>
      <i className="absolute left-[961px] top-0 h-[2px] w-[2px] bg-[#7fa59c]" />
      <Bubble out time="09:05" box="mt-[2px] w-[120px] h-[103px]">
        <Clock />
        <div className="absolute -left-[39px] top-[35px] flex h-[31px] w-[31px] items-center justify-center rounded-full bg-[#05090c]">
          <svg className="h-[19px] w-[19px]" viewBox="0 0 19 19"><circle cx="9.500" cy="9.500" r="9.500" fill="#8b8f92" /><circle cx="6.200" cy="7.200" r="1.500" fill="#05090c" /><circle cx="12.800" cy="7.200" r="1.500" fill="#05090c" /><path d="M4 10.500q5.500 1 11 0-1 4.200-5.500 4.200T4 10.500Z" fill="#05090c" /></svg>
        </div>
      </Bubble>
      <Bubble out time="09:05" box="mt-[2px] w-[155px] h-[42px]" textBox="pt-[8px] tracking-[-0.8px]">Cha nahi</Bubble>
      <Bubble tail time="21:49" box="mt-[15px] w-[90px] h-[41px]" textBox="pt-[7px] tracking-[-0.8px]">Yee</Bubble>
      <Bubble out tail time="21:49" box="mt-[15px] w-[115px] h-[41px]" textBox="pt-[7px] tracking-[-0.8px]">haa</Bubble>
      <Bubble tail time="21:49" box="mt-[15px] w-[191px] h-[43px]" textBox="pt-[8px] tracking-[-0.55px]">1 gb Mar na<HandOverMouth /></Bubble>
      <Bubble out tail time="21:49" box="mt-[15px] w-[106px] h-[41px]" textBox="pt-[7px] pl-px tracking-[-0.55px]">bc</Bubble>
      <Bubble out time="21:50" box="mt-[2px] w-[336px] h-[42px]" textBox="pt-[8px] tracking-[-0.72px]">phone majhya kade nahi hai ara</Bubble>
      <Bubble out time="21:50" box="mt-[2px] w-[157px] h-[41px]" textBox="pt-[8px] pl-px tracking-[-0.75px]">khali ahe</Bubble>
      <Bubble out time="21:50" box="mt-[3px] w-[256px] h-[41px]" textBox="pt-[7px] tracking-[-0.67px]">ani me laptop brr ahe</Bubble>
      <Bubble tail time="21:50" box="mt-[15px] w-[153px] h-[88px]">
        <div className="absolute left-[32px] top-[16px] flex gap-[6px]"><Smile /><Smile /></div>
      </Bubble>
      <Bubble out tail time="21:51" read={false} box="mt-[15px] w-[207px] h-[41px]" textBox="pt-[7px] pl-px tracking-[-0.82px]">khara re bhawa</Bubble>
    </div>
    <div className="absolute bottom-0 right-0 h-[393px] w-[7px] bg-[#374045]" />
  </div>
);

const Composer = () => (
  <div className="flex h-[77px] shrink-0 items-center bg-[#202c33] pl-[31px] pr-[34px]">
    <svg className="h-[30px] w-[30px]" viewBox="0 0 30 30">
      <circle cx="15" cy="15" r="13.900" fill="none" stroke="#8696a0" strokeWidth="2" />
      <ellipse cx="10.800" cy="11.500" rx="1.800" ry="2.500" fill="#8696a0" /><ellipse cx="19.200" cy="11.500" rx="1.800" ry="2.500" fill="#8696a0" />
      <path d="M7 16.300q8 2.400 16 0-.8 7-8 7t-8-7Z" fill="#8696a0" /><path d="M9.500 18.800q5.500 1.300 11 0" stroke="#202c33" strokeWidth="1.200" fill="none" />
    </svg>
    <svg className="ml-[25px] h-[22px] w-[22px]" viewBox="0 0 22 22" stroke="#8696a0" strokeWidth="2.700"><path d="M11 0v22M0 11h22" /></svg>
    <div className="ml-[24px] flex h-[52px] w-[1097px] items-center rounded-[10px] bg-[#2a3942] pl-[16px]">
      <i className="h-[25px] w-px bg-[#e9edef]" />
      <span className="ml-[4px] text-[18.500px] tracking-[-0.55px] text-[#8696a0]">Type a message</span>
    </div>
    <svg className="ml-auto h-[28px] w-[21px]" viewBox="0 0 21 28" fill="none" stroke="#8696a0"><rect x="6" y="0" width="9" height="18" rx="4.500" fill="#8696a0" stroke="none" /><path d="M1.300 13.500q.6 8.300 9.200 8.300t9.200-8.300M10.500 21.500V28" strokeWidth="2.400" /></svg>
  </div>
);

/* ---------- Windows taskbar ---------- */

const ChromeLogo = () => (
  <svg className="h-[30px] w-[30px]" viewBox="0 0 48 48">
    <circle cx="24" cy="24" r="24" fill="#f7c62b" />
    <path d="M24 12H44.800A24 24 0 0 0 3.200 12L13.600 30Z" fill="#dd4436" />
    <path d="M3.200 12A24 24 0 0 0 24 48L34.400 30 24 24 13.600 30Z" fill="#2b9a4b" />
    <path d="M44.800 12H24L34.400 30 24 48A24 24 0 0 0 44.800 12Z" fill="#f7c62b" />
    <circle cx="24" cy="24" r="11.800" fill="#fff" /><circle cx="24" cy="24" r="9.300" fill="#3478ec" />
  </svg>
);

const Taskbar = () => (
  <div className="flex h-[39px] items-start overflow-hidden bg-linear-to-r from-[#243840] via-[#1f333f] via-55% to-[#1b2748] text-white">
    <svg className="ml-[5px] mt-[13px] h-[26px] w-[28px] shrink-0" viewBox="0 0 28 26">
      <path d="M0 0h10l3 4h15v8H0Z" fill="#d79a1d" /><path d="M0 5h12l3-1.500h13V23H0Z" fill="#fbd567" /><path d="M5 23v-9q0-2 2-2h14q2 0 2 2v9h-5v-5h-8v5Z" fill="#3e93d6" />
    </svg>
    <svg className="ml-[33px] mt-[10px] h-[30px] w-[30px] shrink-0" viewBox="0 0 30 30">
      <path d="M22 0 0 19.500 3 22.500 22 8.500Z" fill="#1b8bd8" /><path d="M22 30 0 10.500 3 7.500 22 21.500Z" fill="#1070b8" /><path d="M22 0 30 3.500V26.500L22 30Z" fill="#2aa3ee" />
    </svg>
    <svg className="ml-[34px] mt-[10px] h-[30px] w-[26px] shrink-0" viewBox="0 0 26 30">
      <path d="M6 0h14l3 3.500 2 1-1 4.500 1 3-3.500 12Q20 26 13 30Q6 26 4.500 24L1 12l1-3L1 4.500l2-1Z" fill="#f4441c" />
      <path d="M8 4.500 13 5.500 18 4.500 22.500 10 19.500 15 20.500 17 16 20 18 22.500 13 26 8 22.500 10 20 5.500 17 6.500 15 3.500 10Z" fill="#fff" />
      <path d="M7 10.500 11 12 10.500 14M19 10.500 15 12 15.500 14M10.500 18.500 13 20l2.500-1.500" stroke="#f4441c" strokeWidth="1.300" fill="none" />
    </svg>
    <div className="ml-[34px] mt-[10px] h-[30px] w-[30px] shrink-0"><ChromeLogo /></div>
    <svg className="ml-[32px] mt-[10px] h-[30px] w-[30px] shrink-0" viewBox="0 0 30 30">
      <rect width="30" height="30" rx="2" fill="#e8691c" /><rect x="2" y="2.500" width="26" height="26" rx="2" fill="#ec7a2e" /><path d="M3 1.500h24" stroke="#f7a468" strokeWidth="1.500" />
      <path d="M9 6.500Q5.500 6.500 5.500 10T8.500 15Q5.500 16.500 5.500 20T9 23.500H11Q13 23.500 13 21T15 18.800Q17 18.800 17 21T19 23.500H21Q24.500 23.500 24.500 20T21.500 15Q24.500 13.500 24.500 10T21 6.500H19Q17 6.500 17 9T15 11.200Q13 11.200 13 9T11 6.500Z" fill="none" stroke="#fff" strokeWidth="3.200" strokeLinejoin="round" />
      <path d="M12.500 15h5" stroke="#fff" strokeWidth="2.500" />
    </svg>
    <svg className="ml-[33px] mt-[11px] h-[28px] w-[28px] shrink-0" viewBox="0 0 28 28" fill="none" stroke="#12261a" strokeLinecap="round"><circle cx="14" cy="14" r="14" fill="#1ed760" stroke="none" /><path d="M6 9.500q9-2.500 17 2" strokeWidth="2.700" /><path d="M6.800 14.200q7.500-2 14 1.700" strokeWidth="2.300" /><path d="M7.500 18.600q6-1.500 11.500 1.500" strokeWidth="1.900" /></svg>
    <svg className="ml-[33px] mt-[11px] h-[28px] w-[29px] shrink-0" viewBox="0 0 29 28">
      <path d="M7 0h22v7H7Z" fill="#41a5ee" /><path d="M7 7h22v7H7Z" fill="#2b7cd3" /><path d="M7 14h22v7H7Z" fill="#185abd" /><path d="M7 21h22v7H7Z" fill="#103f91" /><rect y="6" width="15" height="15" rx="1" fill="#1d57b5" />
      <text x="7.500" y="17.500" fontSize="11" fontWeight="700" textAnchor="middle" fill="#fff" fontFamily="Open Sans, sans-serif">W</text>
    </svg>
    <div className="relative ml-[18px] flex h-[39px] w-[61px] shrink-0 justify-center bg-[#50616b] pt-[10px]"><ChromeLogo /><i className="absolute left-[27px] top-[22px] h-[20px] w-[20px] rounded-full bg-black" /></div>
    <svg className="ml-auto mt-[9px] h-[26px] w-[32px] shrink-0" viewBox="0 0 32 26">
      <defs><linearGradient id="cl" x1="0" y1="0" x2="0" y2="1"><stop offset="0" stopColor="#e3ecfb" /><stop offset="1" stopColor="#a9c0ee" /></linearGradient></defs>
      <path d="M6 25.500Q0 25 0 19.500 0 14 6 13.500 7 6 15 6 21 6 23 13 30 13 30 19.500 30 25 24 25.500Z" fill="url(#cl)" />
      <circle cx="22.500" cy="8.500" r="7.500" fill="#c42b1c" /><text x="22.500" y="12" fontSize="10.500" textAnchor="middle" fill="#fff" fontFamily="Open Sans, sans-serif">1</text>
    </svg>
    <div className="ml-[8px] mt-[14px] w-[105px] shrink-0 whitespace-pre text-[18px] leading-6 tracking-[-0.4px] [word-spacing:0.5px]">24°C  Cloudy</div>
    <svg className="ml-[19px] mt-[20px] h-[10px] w-[16px] shrink-0" viewBox="0 0 16 10" fill="none" stroke="#fff" strokeWidth="1.400"><path d="M.5 9 8 1.500 15.500 9" /></svg>
    <svg className="ml-[15px] mt-[17px] h-[17px] w-[17px] shrink-0" viewBox="0 0 17 17" fill="none" stroke="#dfe5ee" strokeWidth="1.300"><path d="M1 16Q1.500 2.500 15.500 1.500" opacity=".55" /><path d="M4.500 16Q5 6.500 15.500 5.500M8 16Q8.500 10 15.500 9.500" /><circle cx="14" cy="14.500" r="1.700" fill="#fff" stroke="none" /></svg>
    <svg className="ml-[14px] mt-[16px] h-[18px] w-[15px] shrink-0" viewBox="0 0 15 18" fill="none" stroke="#fff" strokeWidth="1.300"><rect x="1" y="4.500" width="9" height="9" rx="1.500" /><path d="M10 8 14 5.500v7L10 10M2.500 2.200q3.500-2 7.500 0M2.500 15.800q3.500 2 7.500 0" /></svg>
    <svg className="ml-[13px] mt-[20px] h-[12px] w-[19px] shrink-0" viewBox="0 0 19 12" fill="none" stroke="#fff" strokeWidth="1.200"><rect x=".6" y=".6" width="16" height="10.500" /><path d="M18 4v4" /><rect x="3" y="3" width="8" height="5.700" fill="#fff" stroke="none" /></svg>
    <div className="ml-[12px] mt-[13px] w-[29px] shrink-0 text-[15px] leading-6 tracking-[-0.7px]">ENG</div>
    <div className="ml-[16px] mt-[2px] w-[76px] shrink-0 whitespace-nowrap text-center text-[14.500px] leading-[22px] tracking-[-0.2px]">21:51<br />07-09-2023</div>
    <div className="relative ml-[23px] mt-[15px] h-[24px] w-[30px] shrink-0">
      <svg className="h-[22px] w-[20px]" viewBox="0 0 20 22"><path d="M0 0h20v17h-7l-4 5v-5H0Z" fill="#fff" /><path d="M4 4.500h12M4 8.500h12M4 12.500h8" stroke="#1b2748" strokeWidth="1.300" /></svg>
      <div className="absolute left-[9px] top-[9px] flex h-[20px] w-[20px] items-center justify-center rounded-full border border-[#868788] bg-[#3a3d42] text-[14px] font-bold leading-none">5</div>
    </div>
    <div className="ml-[14px] mr-[5px] h-full w-px shrink-0 bg-[#5d6884]" />
  </div>
);

export default function App() {
  return (
    <div className="flex h-[1069px] w-[1363px] flex-col overflow-hidden bg-[#0a1216] font-['Noto_Sans','Open_Sans',sans-serif]">
      <TabStrip />
      <Toolbar />
      <div className="my-[24px] mr-[24px] flex h-[886px]">
        <Sidebar />
        <div className="flex min-w-0 flex-1 flex-col">
          <ChatHeader />
          <Messages />
          <Composer />
        </div>
      </div>
      <Taskbar />
    </div>
  );
}
